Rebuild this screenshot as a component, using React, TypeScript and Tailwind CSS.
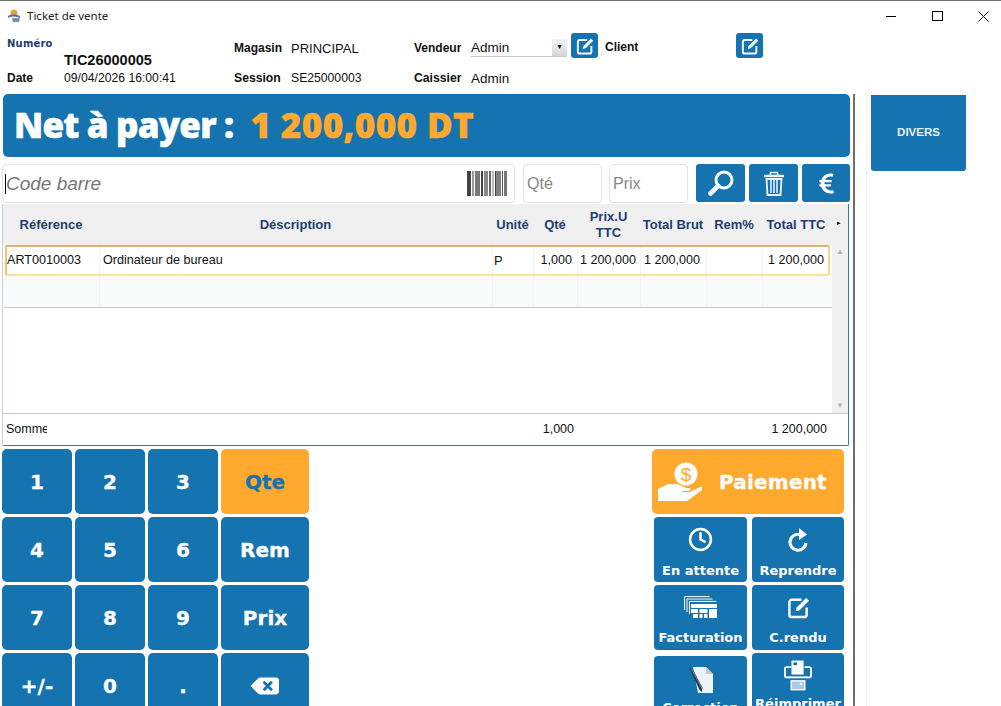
import React from "react";
import { FaEuroSign, FaBackspace } from "react-icons/fa";
import { Clock } from "lucide-react";

const sans = "font-['Liberation_Sans',Arial,sans-serif]";

function EditGlyph({ size }: { size: number }) {
  return (
    <svg width={size} height={size} viewBox="0 0 24 24" fill="none">
      <path d="M15 4H5a2.500 2.500 0 0 0-2.500 2.500v13A2.500 2.500 0 0 0 5 22h13a2.500 2.500 0 0 0 2.500-2.500V12" stroke="#f4fafd" strokeWidth="2.600" />
      <path d="M9 16l1-4L20 2l3 3-10 10z" fill="#f4fafd" />
    </svg>
  );
}

function EditBtn() {
  return (
    <div className="flex h-[25px] w-[27px] items-center justify-center rounded-[3px] bg-[#1573b0]">
      <EditGlyph size={18} />
    </div>
  );
}

function TopBtn({ w, children }: { w: string; children: React.ReactNode }) {
  return (
    <div className={`flex h-[38px] items-center justify-center rounded-[3px] bg-[#1573b0] text-white ${w}`}>
      {children}
    </div>
  );
}

function Magnifier() {
  return (
    <svg width="26" height="26" viewBox="0 0 26 26" fill="none" stroke="#f4fafd">
      <circle cx="16" cy="10" r="8" strokeWidth="3" />
      <path d="M10 16L2.500 23.500" strokeWidth="4.600" strokeLinecap="round" />
    </svg>
  );
}

function Trash() {
  return (
    <svg width="20" height="25" viewBox="0 0 20 25" fill="none" stroke="#ecf6fc">
      <path d="M0 5h20" strokeWidth="2.400" />
      <path d="M6.500 4V1.500h7V4" strokeWidth="1.600" />
      <path d="M2.500 8l1 16h13l1-16z" strokeWidth="1.800" />
      <path d="M7 9v13M10 9v13M13 9v13" strokeWidth="1.500" />
    </svg>
  );
}

function Barcode() {
  const bars = [
    [0, 4, "#444"], [5, 2, "#999"], [8, 5, "#777"], [14, 2, "#444"], [17, 4, "#888"], [22, 2, "#666"], [25, 2, "#bbb"],
    [28, 1, "#444"], [29, 5, "#808080"], [35, 1, "#555"], [37, 3, "#777"],
  ] as const;
  return (
    <svg width="40" height="25" viewBox="0 0 40 25">
      {bars.map(([x, w, c], i) => (
        <rect key={i} x={x} y="0" width={w} height="25" fill={c} />
      ))}
    </svg>
  );
}

function Header() {
  const h = `flex items-center justify-center text-center text-[13px] font-bold leading-[16px] text-[#1d3f72] ${sans}`;
  return (
    <div className="flex h-[41px] bg-[#f0f0f0] pt-[1px]">
      <div className="grid grid-cols-[96px_393px_41px_44px_63px_66px_56px_68px]">
        <div className={h}>Référence</div>
        <div className={h}>Déscription</div>
        <div className={h}>Unité</div>
        <div className={h}>Qté</div>
        <div className={h}>Prix.U<br />TTC</div>
        <div className={h}>Total Brut</div>
        <div className={h}>Rem%</div>
        <div className={h}>Total TTC</div>
      </div>
      <div className="flex flex-1 items-center justify-center pb-[4px] text-[7px] text-black">▸</div>
    </div>
  );
}

function Row() {
  const c = "flex items-center border-l border-[#f8f3e8] overflow-hidden whitespace-nowrap";
  return (
    <div className="grid h-[31px] w-[825px] grid-cols-[92px_393px_41px_44px_63px_66px_56px_66px] rounded-[2px] border-2 border-t-[#dcb27c] border-r-[#f5d68c] border-b-[#f8e2a0] border-l-[#f3c468] bg-white text-[12.6px] text-[#111]">
      <div className="flex items-center">ART0010003</div>
      <div className={`${c} pl-[3px]`}>Ordinateur de bureau</div>
      <div className={`${c} pl-[1px] text-[13px]`}>P</div>
      <div className={`${c} justify-end pr-[5px]`}>1,000</div>
      <div className={`${c} justify-end pr-[4px]`}>1 200,000</div>
      <div className={`${c} pl-[3px]`}>1 200,000</div>
      <div className={c} />
      <div className={`${c} justify-end pr-[4px]`}>1 200,000</div>
    </div>
  );
}

function Table() {
  return (
    <div className={`ml-[2px] flex h-[242px] w-[847px] flex-col overflow-hidden rounded-b-[2px] border-x border-b border-x-[#c4d0dc] border-b-[#2f78aa] border-r-[#2f78aa] ${sans}`}>
      <Header />
      <div className="flex h-[169px] border-b border-[#c8c8c8]">
        <div className="flex flex-1 flex-col pl-[2px]">
          <Row />
          <div className="-ml-[1px] grid h-[32px] w-[828px] grid-cols-[95px_393px_41px_44px_63px_66px_56px_68px] border-b border-[#c8c8c8] bg-[#f9fafa]">
            {Array.from({ length: 8 }).map((_, i) => (
              <div key={i} className={i ? "border-l border-[#f3f3f3]" : ""} />
            ))}
          </div>
        </div>
        <div className="flex w-[17px] flex-col items-center justify-between bg-[#f1f1f1] py-[2px] text-[8px] leading-[10px] text-[#b4b4b4]">
          <span>▲</span>
          <span>▼</span>
        </div>
      </div>
      <div className="flex h-[31px] items-center text-[12.5px] text-[#111]">
        <div className="w-[44px] overflow-hidden whitespace-nowrap pl-[3px]">Somme</div>
        <div className="ml-[487px] w-[40px] text-right leading-none">1,000</div>
        <div className="ml-[193px] w-[60px] text-right leading-none">1 200,000</div>
      </div>
    </div>
  );
}

function Key({ label, wide, orange }: { label: React.ReactNode; wide?: boolean; orange?: boolean }) {
  return (
    <div
      className={`flex h-[65px] items-center justify-center rounded-[5px] font-['DejaVu_Sans',sans-serif] text-[20px] font-bold [-webkit-text-stroke:0.3px_currentColor] ${
        orange ? "bg-[#ffa92e] text-[#1573b0]" : "bg-[#1573b0] text-white"
      }`}
    >
      {label}
    </div>
  );
}

function Action({ icon, label, w, iconBox }: { icon: React.ReactNode; label: string; w: string; iconBox: string }) {
  return (
    <div className={`flex h-[65px] flex-col items-center rounded-[4px] bg-[#1573b0] text-white ${w}`}>
      <div className={`flex items-start justify-center ${iconBox}`}>{icon}</div>
      <div className="whitespace-nowrap font-['DejaVu_Sans',sans-serif] text-[13px] font-bold leading-[16px]">{label}</div>
    </div>
  );
}

function Redo() {
  return (
    <svg width="21" height="25" viewBox="0 0 21 25" fill="none">
      <path d="M12 6.500A8 8 0 1 0 18 15" stroke="#f4fafd" strokeWidth="3.200" />
      <path d="M11 0l8 6.500L11 12z" fill="#f4fafd" />
    </svg>
  );
}

function Invoices() {
  return (
    <svg width="33" height="22" viewBox="0 0 33 22" fill="none">
      <path d="M.6 14V.6h25M3 16V3h25.500M5.400 18V5.400h27" stroke="#fff" strokeWidth="1" />
      <path d="M7 8h26v4H7zM7 13h7v4H7zM15.500 13h8v4h-8zM25 13h8v9h-8zM9 18h5v4H9zM15.500 18h3v4h-3zM20 18h3.500v4H20z" fill="#fff" />
    </svg>
  );
}

function Doc() {
  return (
    <svg width="24" height="26" viewBox="0 0 24 26">
      <path d="M4 0h13l7 7v19H9z" fill="#eef3f5" />
      <path d="M17 0l7 7h-7z" fill="#c3cbd0" />
      <path d="M0 0l2.500 0 11 21-1 4-2-2z" fill="#28394a" />
      <path d="M2.500 0l11 21-1 1L1.500 1z" fill="#557a9c" />
    </svg>
  );
}

function Printer() {
  return (
    <svg width="28" height="32" viewBox="0 0 30 33" fill="none">
      <path d="M8 1h13v15H8z" fill="#fff" />
      <path d="M10 3h4v3h-4z" fill="#1573b0" />
      <path d="M8 8H3a2 2 0 0 0-2 2v7a2 2 0 0 0 2 2h3M22 8h5a2 2 0 0 1 2 2v7a2 2 0 0 1-2 2h-3" stroke="#fff" strokeWidth="2" />
      <path d="M5 19h20" stroke="#fff" strokeWidth="2" />
      <path d="M7 22h16v11H7z" fill="#fff" />
      <path d="M8.500 23.500h13v8h-13z" fill="#a9cbe4" />
      <path d="M17 25h2v2h-2z" fill="#fff" />
    </svg>
  );
}

function CashIcon() {
  return (
    <svg width="46" height="42" viewBox="0 0 46 42">
      <circle cx="30" cy="13" r="11.500" fill="#fff" />
      <text x="30" y="20" textAnchor="middle" fontSize="19" fontFamily="'Liberation Sans', sans-serif" fill="#ffa92e">$</text>
      <path d="M2 28l10-5h9l9 4h3c2 0 2 3 0 3l-7 0 0 1 8 0 10-5c2-1 3 1 2 3l-15 11H2z" fill="#fff" />
    </svg>
  );
}

export default function App() {
  return (
    <div className={`flex h-[706px] w-[1001px] flex-col overflow-hidden border-t border-[#6e6e6e] bg-white ${sans}`}>
      <div className="flex h-[29px] items-center pl-[8px] pt-[1px] font-['Noto_Sans',sans-serif] text-[11.5px] text-[#222]">
        <svg width="13" height="14" viewBox="0 0 13 14" className="mr-[6px]">
          <circle cx="6" cy="4" r="3.500" fill="#e8a23a" />
          <path d="M0 7c3-2 8-2 12 0v2c-4-2-9-2-12 0z" fill="#3f76b8" />
          <path d="M4 9h8l-1 4H5z" fill="#7a8fa8" />
        </svg>
        <span>Ticket de vente</span>
        <div className="-mr-[5px] ml-auto flex items-center">
          <div className="flex w-[46px] justify-center"><div className="h-[1px] w-[10px] bg-black" /></div>
          <div className="flex w-[46px] justify-center"><div className="h-[10px] w-[11px] border border-black" /></div>
          <div className="flex w-[46px] justify-center">
            <svg width="11" height="11" viewBox="0 0 11 11" stroke="#111" strokeWidth="1"><path d="M.5.500l10 10M10.500.500l-10 10" /></svg>
          </div>
        </div>
      </div>

      <div className="grid h-[63px] grid-cols-[57px_170px_57px_123px_57px_100px_34px_131px_27px] grid-rows-[37px_26px] pl-[7px] text-[12px] text-[#111]">
        <div className="pt-[6px] font-['DejaVu_Sans',sans-serif] text-[10px] font-bold tracking-[0.2px] text-[#1d3f72]">Numéro</div>
        <div className="mb-[-1px] self-end text-[14.5px] font-bold leading-[16px]">TIC26000005</div>
        <div className="pt-[9px] font-bold">Magasin</div>
        <div className="pt-[11px] text-[13px] leading-[16px]">PRINCIPAL</div>
        <div className="pt-[9px] font-bold">Vendeur</div>
        <div className="pt-[9px]">
          <div className="flex h-[18px] w-[96px] items-center justify-between border-b border-[#c8c8c8] text-[13.5px]">
            <span className="pt-[1px]">Admin</span>
            <div className="flex h-full w-[15px] items-center justify-center bg-gradient-to-b from-[#f4f4f4] to-[#d6d6d6] text-[7px] text-black">▼</div>
          </div>
        </div>
        <div className="pt-[3px]"><EditBtn /></div>
        <div className="pt-[8px] font-bold">Client</div>
        <div className="pt-[3px]"><EditBtn /></div>

        <div className="pt-[2px] font-bold">Date</div>
        <div className="pt-[2px] text-[12.2px]">09/04/2026 16:00:41</div>
        <div className="pt-[2px] text-[12.2px] font-bold">Session</div>
        <div className="pt-[2px] text-[12.2px]">SE25000003</div>
        <div className="pt-[2px] text-[12.2px] font-bold">Caissier</div>
        <div className="pt-[4px] text-[13.5px] leading-[16px]">Admin</div>
      </div>

      <div className="flex flex-1 overflow-hidden">
        <div className="w-[851px] pt-[1px]">
          <div className="ml-[3px] flex h-[63px] w-[847px] items-center gap-[17px] rounded-[5px] bg-[#1573b0] pl-[11px] font-['Open_Sans',sans-serif] text-[35px] font-extrabold [-webkit-text-stroke:0.5px_currentColor]">
            <span className="tracking-[-0.8px] text-white">Net à payer :</span>
            <span className="tracking-[0.4px] text-[#ffa92e]">1 200,000 DT</span>
          </div>

          <div className="mt-[7px] flex h-[40px] items-start pl-[2px]">
            <div className="flex h-[39px] w-[513px] items-center justify-between rounded-[4px] border border-[#e4e4e4] pl-[2px] pr-[7px]">
              <span className="border-l border-black text-[19px] italic leading-[20px] text-[#777]">Code barre</span>
              <Barcode />
            </div>
            <div className="ml-[8px] flex h-[39px] w-[79px] items-center rounded-[4px] border border-[#e4e4e4] pl-[3px] text-[16px] text-[#888]">Qté</div>
            <div className="ml-[7px] flex h-[39px] w-[79px] items-center rounded-[4px] border border-[#e4e4e4] pl-[3px] text-[16px] text-[#888]">Prix</div>
            <div className="ml-[8px] flex gap-[4px]">
              <TopBtn w="w-[49px]"><Magnifier /></TopBtn>
              <TopBtn w="w-[49px]"><Trash /></TopBtn>
              <TopBtn w="w-[48px]"><FaEuroSign size={23} /></TopBtn>
            </div>
          </div>

          <Table />

          <div className="mt-[3px] flex items-start pl-[2px]">
            <div className="grid grid-cols-[70px_70px_70px_88px] gap-[3px]">
              <Key label="1" /><Key label="2" /><Key label="3" /><Key label="Qte" orange />
              <Key label="4" /><Key label="5" /><Key label="6" /><Key label="Rem" />
              <Key label="7" /><Key label="8" /><Key label="9" /><Key label="Prix" />
              <Key label="+/-" /><Key label="0" /><Key label="." /><Key label={<FaBackspace size={28} />} />
            </div>
            <div className="ml-[343px] flex flex-col">
              <div className="flex h-[65px] w-[192px] items-center rounded-[5px] bg-[#ffa92e] pl-[4px] text-white">
                <CashIcon />
                <span className="ml-[17px] font-['DejaVu_Sans',sans-serif] text-[20px] font-bold tracking-[0.2px] [-webkit-text-stroke:0.3px_currentColor]">Paiement</span>
              </div>
              <div className="ml-[2px] mt-[3px] flex gap-[5px]">
                <Action w="w-[93px]" iconBox="h-[46px] pt-[10px]" icon={<Clock size={25} strokeWidth={2.4} />} label="En attente" />
                <Action w="w-[92px]" iconBox="h-[46px] pt-[11px]" icon={<Redo />} label="Reprendre" />
              </div>
              <div className="ml-[2px] mt-[3px] flex gap-[5px]">
                <Action w="w-[93px]" iconBox="h-[45px] pt-[11px]" icon={<Invoices />} label="Facturation" />
                <Action w="w-[92px]" iconBox="h-[45px] pt-[11px]" icon={<EditGlyph size={23} />} label="C.rendu" />
              </div>
              <div className="ml-[2px] flex items-start gap-[5px]">
                <div className="mt-[6px]">
                  <Action w="w-[93px]" iconBox="h-[44px] pt-[11px]" icon={<Doc />} label="Correction" />
                </div>
                <div className="mt-[3px]">
                  <Action w="w-[92px]" iconBox="h-[43px] pt-[6px]" icon={<Printer />} label="Réimprimer" />
                </div>
              </div>
            </div>
          </div>
        </div>

        <div className="ml-[2px] mt-[1px] h-full w-[2px] bg-[#6e6e6e]" />
        <div className="ml-[11px] h-full w-[1px] bg-[#f1f1f1]" />
        <div className="ml-[4px] mt-[2px] flex h-[76px] w-[95px] items-center justify-center rounded-b-[3px] bg-[#1573b0] text-[11.5px] font-bold text-[#e8f2f8]">
          DIVERS
        </div>
      </div>
    </div>
  );
}
